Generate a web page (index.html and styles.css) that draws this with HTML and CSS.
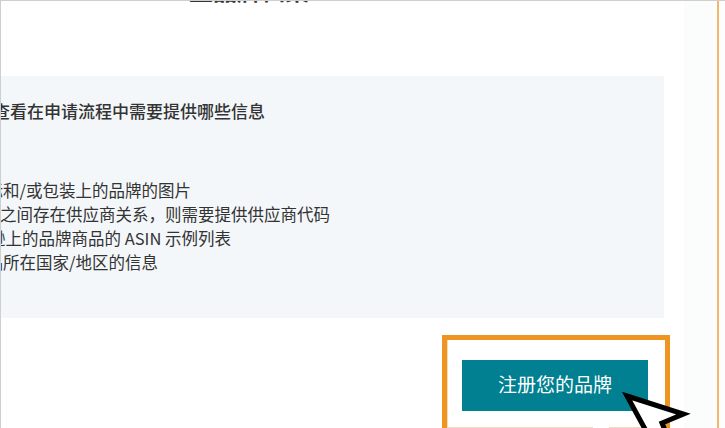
FILE: index.html
```html
<!DOCTYPE html>
<html lang="zh">
<head>
<meta charset="utf-8">
<title>注册您的品牌</title>
<link rel="stylesheet" href="styles.css">
</head>
<body>
<div class="page">
  <main class="main">
    <div class="title-area"><h1 class="title">立品牌档案</h1></div>
    <section class="panel">
      <h2 class="panel-heading">查看在申请流程中需要提供哪些信息</h2>
      <ul class="list">
        <li>商标和/或包装上的品牌的图片</li>
        <li>如果之间存在供应商关系，则需要提供供应商代码</li>
        <li>亚马逊上的品牌商品的 ASIN 示例列表</li>
        <li>商品所在国家/地区的信息</li>
      </ul>
    </section>
    <div class="cta-row">
      <div class="frame">
        <div class="frame-inner">
          <a class="button" href="#">注册您的品牌</a>
          <span class="bump"></span>
        </div>
      </div>
    </div>
  </main>
  <aside class="rail"></aside>
  <svg class="cursor" width="80" height="50" viewBox="0 0 80 50" aria-hidden="true">
    <path d="M5 8 L61.5 26 L40 35 L47 52 L29 52 Z" fill="#fff" stroke="#000" stroke-width="5" stroke-linejoin="miter" stroke-miterlimit="8"/>
  </svg>
</div>
</body>
</html>
```
FILE: styles.css
```css
* { box-sizing: border-box; }
html, body { margin: 0; padding: 0; }
body {
  background: #fdfdfd;
  font-family: "Noto Sans CJK SC", "Noto Sans", sans-serif;
}
.page {
  position: relative;
  display: flex;
  width: 725px;
  height: 428px;
  overflow: hidden;
  border-top: 1px solid #cfcfcf;
}
.main {
  width: 684px;
  flex: none;
  background: #fff;
  border-left: 1px solid #cfcfcf;
}
.title-area {
  height: 75px;
  overflow: hidden;
}
.title {
  margin: -25px 0 0 188px;
  font-size: 24px;
  line-height: 28px;
  font-weight: 700;
  color: #333;
  white-space: nowrap;
}
.panel {
  width: 663px;
  height: 242px;
  overflow: hidden;
  background: #f4f7fa;
  color: #333;
  white-space: nowrap;
}
.panel-heading {
  margin: 23px 0 0 -8px;
  font-size: 17px;
  line-height: 24px;
  font-weight: 500;
}
.list {
  list-style: none;
  margin: 55px 0 0;
  padding: 0;
  font-size: 16.5px;
  line-height: 24px;
  font-weight: 400;
}
.list li:nth-child(1) { margin-left: -31px; }
.list li:nth-child(2) { margin-left: -34px; }
.list li:nth-child(3) { margin-left: -45px; }
.list li:nth-child(4) { margin-left: -31px; }
.cta-row {
  display: flex;
  justify-content: flex-end;
  margin-top: 17px;
  padding-right: 14px;
}
.frame {
  width: 228px;
  height: 110px;
  flex: none;
  border: 5px solid #ee9420;
}
.frame-inner {
  position: relative;
  height: 88px;
  padding: 20px 0 0 14px;
  border-left: 1px solid #f9dcb6;
  border-bottom: 1px solid #f6dcbc;
}
.button {
  display: flex;
  align-items: center;
  justify-content: center;
  width: 186px;
  height: 51px;
  padding-bottom: 4px;
  background: #008091;
  color: #fff;
  font-size: 19px;
  text-decoration: none;
}
.bump {
  position: absolute;
  left: 145px;
  bottom: -8px;
  width: 16px;
  height: 16px;
  border-radius: 50%;
  background: #fff;
}
.rail {
  width: 35px;
  flex: none;
  background: #fbfcfc;
  border-right: 2px solid #f3b76b;
}
.cursor {
  position: absolute;
  left: 622px;
  top: 387px;
}
```
